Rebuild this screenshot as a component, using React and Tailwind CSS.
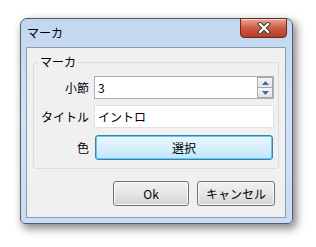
import React from "react";

const FONT = { fontFamily: '"Noto Sans CJK JP", "Noto Sans", sans-serif' };

function CloseButton() {
  return (
    <div className="absolute top-[-1px] right-[5px] w-[47px] h-[20px] rounded-b-[4px] border border-[#6b2a20] bg-gradient-to-b from-[#e6a89c] via-[#cf5a44] to-[#b73a22] flex items-center justify-center shadow-[inset_0_1px_0_rgba(255,255,255,0.5)]">
      <svg width="14" height="12" viewBox="0 0 14 12">
        <path d="M3 2 L11 10 M11 2 L3 10" stroke="#3b3b3b" strokeWidth="4.2" strokeLinecap="square" />
        <path d="M3 2 L11 10 M11 2 L3 10" stroke="#ffffff" strokeWidth="2.2" strokeLinecap="square" />
      </svg>
    </div>
  );
}

function SpinBox() {
  return (
    <div className="w-[180px] h-[23px] border border-[#abadb3] bg-white flex items-center justify-between">
      <span className="pl-[3px] text-[12px] leading-none text-black">3</span>
      <div className="flex flex-col h-full w-[16px] py-[0px] gap-0">
        <div className="flex-1 border border-[#a8a8a8] bg-gradient-to-b from-[#f5f5f5] to-[#e4e4e4] flex items-center justify-center">
          <svg width="7" height="4" viewBox="0 0 7 4"><path d="M0 4 L3.5 0 L7 4 Z" fill="#4a66a8" /></svg>
        </div>
        <div className="flex-1 border border-t-0 border-[#a8a8a8] bg-gradient-to-b from-[#f5f5f5] to-[#e4e4e4] flex items-center justify-center">
          <svg width="7" height="4" viewBox="0 0 7 4"><path d="M0 0 L3.5 4 L7 0 Z" fill="#4a66a8" /></svg>
        </div>
      </div>
    </div>
  );
}

export default function App() {
  return (
    <div className="w-[316px] h-[247px] bg-white pt-[18px] pl-[20px] overflow-hidden" style={FONT}>
      <div className="relative w-[273px] h-[206px] rounded-t-[7px] rounded-b-[5px] border border-[#4e5d70] bg-gradient-to-b from-[#c2d7ef] via-[#d3e3f6] to-[#cadcf3] shadow-[3px_4px_9px_1px_rgba(0,0,0,0.45)] flex flex-col">
        <CloseButton />
        <div className="h-[28px] pl-[6px] flex items-center text-[12px] text-black leading-none">
          マーカ
        </div>
        <div className="ml-[5px] w-[260px] h-[171px] border border-[#8a9cb2] bg-[#f0f0f0] pt-[14px] px-[6px] flex flex-col">
          <div className="relative w-[246px] border border-[#d5dfe5] rounded-[3px] pt-[13px] pb-[8px] pl-0 pr-[5px]">
            <span className="absolute left-[4px] top-[-9px] bg-[#f0f0f0] px-[2px] text-[12px] leading-[16px] text-black">
              マーカ
            </span>
            <div className="grid grid-cols-[55px_180px] gap-x-[5px]">
              <div className="h-[23px] flex items-center justify-end text-[12px] leading-none text-black">小節</div>
              <SpinBox />
              <div className="h-[23px] mt-[6px] flex items-center justify-end text-[12px] leading-none text-black">タイトル</div>
              <div className="h-[23px] mt-[6px] border border-[#dfe3e8] bg-white flex items-center pl-[3px] text-[12px] leading-none text-black">
                イントロ
              </div>
              <div className="h-[25px] mt-[7px] flex items-center justify-end text-[12px] leading-none text-black">色</div>
              <div className="h-[25px] mt-[7px] ml-[1px] w-[178px] rounded-[3px] border border-[#3c7fb1] bg-gradient-to-b from-[#eaf6fd] via-[#d9f0fc] to-[#bee6fd] shadow-[inset_0_0_0_1px_#61c7f5] flex items-center justify-center text-[12px] leading-none text-black">
                選択
              </div>
            </div>
          </div>
          <div className="mt-[12px] mr-[4px] flex justify-end gap-[8px]">
            <div className="w-[76px] h-[25px] rounded-[3px] border border-[#707070] bg-gradient-to-b from-[#f2f2f2] via-[#e6e6e6] to-[#d2d2d2] shadow-[inset_0_0_0_1px_#fcfcfc] flex items-center justify-center text-[12px] leading-none text-black">
              Ok
            </div>
            <div className="w-[78px] h-[25px] rounded-[3px] border border-[#707070] bg-gradient-to-b from-[#f2f2f2] via-[#e6e6e6] to-[#d2d2d2] shadow-[inset_0_0_0_1px_#fcfcfc] flex items-center justify-center text-[12px] leading-none text-black">
              キャンセル
            </div>
          </div>
        </div>
      </div>
    </div>
  );
}
